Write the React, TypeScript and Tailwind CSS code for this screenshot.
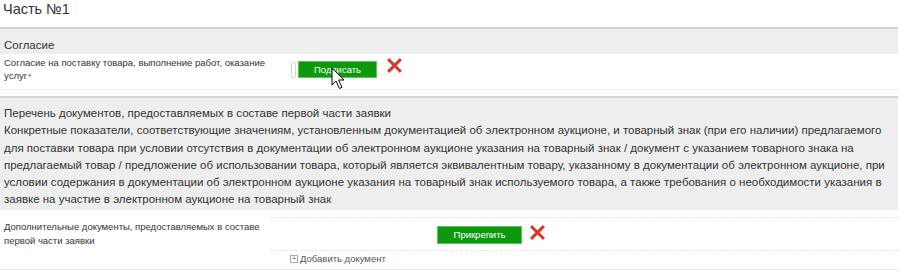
import React from 'react';

function RedX() {
  return (
    <svg width="15" height="15" viewBox="0 0 15 15" className="shrink-0">
      <path d="M2.2 2.2 L12.8 12.8 M12.8 2.2 L2.2 12.8" stroke="#d9362b" strokeWidth="3" strokeLinecap="square" />
    </svg>
  );
}

function Cursor() {
  return (
    <svg width="16" height="24" viewBox="0 0 16 24" className="absolute left-[33px] top-[6px]">
      <path
        d="M1 1 L1 18 L5 14 L8.5 21.5 L11 20.3 L7.6 13 L13 13 Z"
        fill="#fff"
        stroke="#000"
        strokeWidth="1"
        strokeLinejoin="round"
      />
    </svg>
  );
}

export default function App() {
  return (
    <div className="w-[900px] h-[271px] overflow-hidden bg-white text-[#333] font-['Liberation_Sans',Arial,sans-serif]">
      <div className="h-[27px] pl-[3px] pt-[1px] text-[14.5px] leading-[17px]">Часть №1</div>

      <div className="mr-[2px] border-t-2 border-[#d2d2d2]">
        <div className="h-[25px] bg-[#eeeeee] pl-[4px] pt-[9px] text-[11.5px] leading-[14px]">Согласие</div>
        <div className="flex h-[36px] border-b border-[#ececec]">
          <div className="w-[291px] pl-[4px] pt-[2px] text-[9.5px] leading-[13px]">
            Согласие на поставку товара, выполнение работ, оказание{' '}
            <span className="whitespace-nowrap">
              услуг<sup className="ml-[1px] top-0 text-[8px] text-[#d00]">*</sup>
            </span>
          </div>
          <div className="flex items-start pt-[7px]">
            <div className="mt-[1px] h-[16px] w-[5px] rounded-[2px] border border-[#d8d8d8]" />
            <div className="relative ml-[2px]">
              <button className="block h-[17px] w-[79px] bg-[#0c9a0c] border border-[#5fc25f] text-white text-[9.5px] leading-[15px]">
                Подписать
              </button>
              <Cursor />
            </div>
            <div className="ml-[10px] -mt-[3px]">
              <RedX />
            </div>
          </div>
        </div>
      </div>

      <div className="mt-[6px] mr-[2px] border-t-2 border-[#d2d2d2] bg-[#eeeeee] h-[114px] pl-[4px] pr-[4px] pt-[7px] text-[11.5px] leading-[17.3px]">
        <div>Перечень документов, предоставляемых в составе первой части заявки</div>
        <div>
          Конкретные показатели, соответствующие значениям, установленным документацией об электронном аукционе, и товарный знак (при его наличии) предлагаемого для поставки товара при условии отсутствия в документации об электронном аукционе указания на товарный знак / документ с указанием товарного знака на предлагаемый товар / предложение об использовании товара, который является эквивалентным товару, указанному в документации об электронном аукционе, при условии содержания в документации об электронном аукционе указания на товарный знак используемого товара, а также требования о необходимости указания в заявке на участие в электронном аукционе на товарный знак
        </div>
      </div>

      <div className="mr-[2px] flex h-[60px] border-b border-[#e6e6e6]">
        <div className="w-[270px] pl-[4px] pt-[10px] text-[9.5px] leading-[14px]">
          Дополнительные документы, предоставляемых в составе первой части заявки
        </div>
        <div className="flex-1 flex flex-col pt-[7px]">
          <div className="h-[34px] border-t border-b border-dashed border-[#e6e6e6] flex items-start pt-[8px] pl-[167px]">
            <button className="block h-[18px] w-[85px] bg-[#0c9a0c] border border-[#5fc25f] text-white text-[9.5px] leading-[16px]">
              Прикрепить
            </button>
            <div className="ml-[8px] -mt-[1px]">
              <RedX />
            </div>
          </div>
          <div className="flex items-center pl-[20px] pt-[2px] text-[9.5px] text-[#555] leading-[12px]">
            <span className="mr-[2px] flex h-[8px] w-[8px] items-center justify-center border border-[#aaa] text-[8px] leading-none text-[#666]">
              +
            </span>
            Добавить документ
          </div>
        </div>
      </div>
    </div>
  );
}
